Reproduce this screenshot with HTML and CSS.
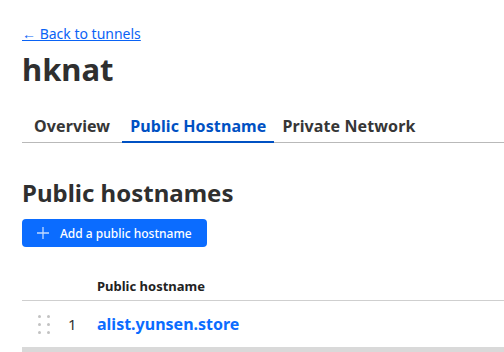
FILE: index.html
```html
<!DOCTYPE html>
<html>
<head>
    <title>hknat - Tunnel</title>
    <link rel="stylesheet" href="styles.css">
</head>
<body>
    <div class="page">
        <a class="back-link" href="#">&larr; Back to tunnels</a>
        <h1 class="tunnel-name">hknat</h1>

        <div class="tabs">
            <a class="tab" href="#">Overview</a>
            <a class="tab active" href="#">Public Hostname</a>
            <a class="tab" href="#">Private Network</a>
        </div>

        <h2 class="section-title">Public hostnames</h2>
        <button class="add-button" type="button">
            <svg class="plus" width="12" height="12" viewBox="0 0 12 12">
                <path d="M6 0v12M0 6h12" stroke="currentColor" stroke-width="1.3"/>
            </svg>
            Add a public hostname
        </button>

        <table class="hosts">
            <tr>
                <th class="col-drag"></th>
                <th class="col-num"></th>
                <th>Public hostname</th>
            </tr>
            <tr>
                <td class="col-drag">
                    <span class="grip">
                        <i></i><i></i><i></i><i></i><i></i><i></i>
                    </span>
                </td>
                <td class="col-num">1</td>
                <td><a class="host-link" href="#">alist.yunsen.store</a></td>
            </tr>
        </table>
        <div class="table-footer"></div>
    </div>
</body>
</html>
```

FILE: styles.css
```css
body {
    font-family: "Noto Sans", "Open Sans", sans-serif;
    margin: 0;
    padding: 0;
    background-color: #fff;
    color: #313131;
    overflow: hidden;
}

.page {
    padding: 22px 0 0 22px;
}

.back-link {
    display: inline-block;
    font-size: 14px;
    line-height: 18px;
    color: #0a63f5;
    text-decoration: underline;
}

.tunnel-name {
    margin: 5px 0 0;
    font-size: 31px;
    line-height: 40px;
    font-weight: 700;
    color: #2f2f2f;
}

.tabs {
    display: flex;
    margin-top: 26px;
    border-bottom: 1px solid #b9b9b9;
}

.tab {
    padding: 0 8px 4px;
    font-size: 16px;
    letter-spacing: 0.1px;
    line-height: 22px;
    font-weight: 700;
    color: #363636;
    text-decoration: none;
    border-bottom: 2px solid transparent;
    margin-bottom: -1px;
}

.tab:first-child {
    padding-left: 12px;
    padding-right: 12px;
}

.tab.active {
    color: #0051c3;
    border-bottom-color: #0051c3;
}

.section-title {
    margin: 34px 0 0;
    font-size: 24px;
    line-height: 32px;
    font-weight: 700;
    color: #2f2f2f;
}

.add-button {
    display: flex;
    align-items: center;
    gap: 11px;
    margin-top: 10px;
    height: 28px;
    padding: 0 15px 0 15px;
    border: none;
    border-radius: 4px;
    background-color: #0b6cff;
    color: #fff;
    font-family: inherit;
    font-size: 12px;
    font-weight: 500;
    cursor: pointer;
}

.plus {
    color: rgba(255, 255, 255, 0.75);
}

.hosts {
    width: 100%;
    border-collapse: collapse;
    margin-top: 30px;
}

.hosts th {
    padding: 0 0 5px;
    text-align: left;
    font-size: 13px;
    line-height: 18px;
    font-weight: 700;
    color: #222;
    border-bottom: 1px solid #cfcfcf;
}

.hosts td {
    padding: 0;
    height: 46px;
}

.col-drag {
    width: 46px;
}

.col-num {
    width: 29px;
    font-size: 15px;
    color: #333;
}

.grip {
    display: grid;
    grid-template-columns: 3px 3px;
    column-gap: 6px;
    row-gap: 5px;
    margin-left: 16px;
    width: 12px;
}

.grip i {
    width: 3px;
    height: 3px;
    border-radius: 50%;
    background-color: #c2c2c2;
}

.host-link {
    font-size: 16px;
    font-weight: 700;
    color: #0b6cff;
    text-decoration: none;
}

.table-footer {
    height: 5px;
    background-color: #d9d9d9;
}
```
